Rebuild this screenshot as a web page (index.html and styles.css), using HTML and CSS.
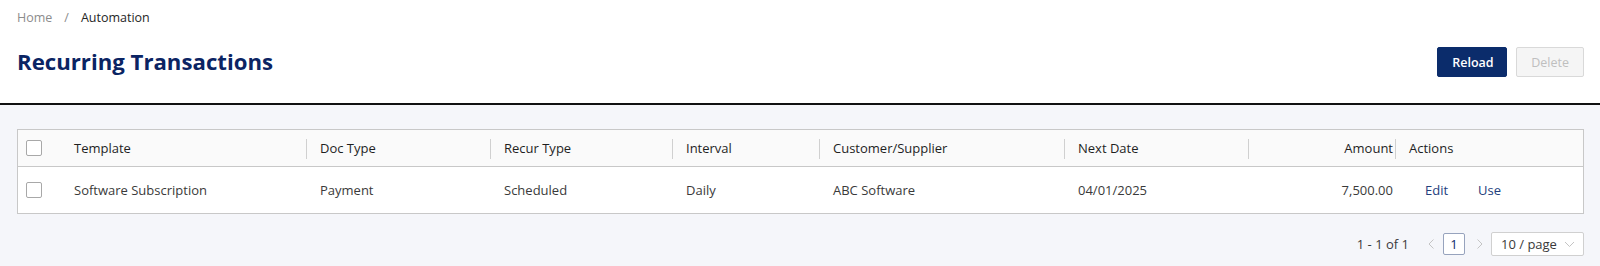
FILE: index.html
```html
<!DOCTYPE html>
<html lang="en">
<head>
  <meta charset="UTF-8">
  <title>Recurring Transactions</title>
  <link rel="stylesheet" href="styles.css">
</head>
<body>
  <div class="page-header">
    <div class="breadcrumb">
      <span class="crumb-link">Home</span>
      <span class="crumb-sep">/</span>
      <span class="crumb-current">Automation</span>
    </div>
    <div class="title-row">
      <h1>Recurring Transactions</h1>
      <div class="header-actions">
        <button class="btn btn-primary">Reload</button>
        <button class="btn" disabled>Delete</button>
      </div>
    </div>
  </div>

  <div class="content">
    <div class="table-wrap">
      <table class="data-table">
        <colgroup>
          <col style="width:43px">
          <col style="width:246px">
          <col style="width:184px">
          <col style="width:182px">
          <col style="width:147px">
          <col style="width:245px">
          <col style="width:184px">
          <col style="width:147px">
          <col>
        </colgroup>
        <thead>
          <tr>
            <th class="cell-check"><span class="checkbox"></span></th>
            <th class="sep">Template</th>
            <th class="sep">Doc Type</th>
            <th class="sep">Recur Type</th>
            <th class="sep">Interval</th>
            <th class="sep">Customer/Supplier</th>
            <th class="sep">Next Date</th>
            <th class="sep num">Amount</th>
            <th>Actions</th>
          </tr>
        </thead>
        <tbody>
          <tr>
            <td class="cell-check"><span class="checkbox"></span></td>
            <td>Software Subscription</td>
            <td>Payment</td>
            <td>Scheduled</td>
            <td>Daily</td>
            <td>ABC Software</td>
            <td>04/01/2025</td>
            <td class="num">7,500.00</td>
            <td class="actions"><a class="link-btn">Edit</a><a class="link-btn">Use</a></td>
          </tr>
        </tbody>
      </table>
    </div>

    <div class="pagination">
      <span class="total">1 - 1 of 1</span>
      <span class="page-arrow">
        <svg width="6" height="10" viewBox="0 0 6 10"><path d="M5.5 0.5 L1 5 L5.5 9.5" fill="none" stroke="#c4c4c4" stroke-width="1"/></svg>
      </span>
      <span class="page-item">1</span>
      <span class="page-arrow">
        <svg width="6" height="10" viewBox="0 0 6 10"><path d="M0.5 0.5 L5 5 L0.5 9.5" fill="none" stroke="#c4c4c4" stroke-width="1"/></svg>
      </span>
      <span class="page-size">10 / page
        <svg width="11" height="7" viewBox="0 0 11 7"><path d="M1 1 L5.5 5.5 L10 1" fill="none" stroke="#c4c4c4" stroke-width="1"/></svg>
      </span>
    </div>
  </div>
</body>
</html>
```

FILE: styles.css
```css
body {
  margin: 0;
  font-family: 'Open Sans', 'Noto Sans', sans-serif;
  font-size: 13px;
  color: #262626;
  background: #f5f6fa;
  height: 266px;
}
.page-header {
  background: #fff;
  padding: 9px 16px 0 17px;
  height: 94px;
  border-bottom: 2px solid #111;
}
.breadcrumb {
  display: flex;
  gap: 12px;
  line-height: 18px;
  font-size: 12.5px;
}
.crumb-link, .crumb-sep {
  color: #8c8c8c;
}
.crumb-current {
  color: #262626;
}
.title-row {
  display: flex;
  justify-content: space-between;
  align-items: center;
  margin-top: 17px;
}
h1 {
  margin: 0;
  font-size: 22.2px;
  font-weight: 700;
  color: #0b2463;
  line-height: 36px;
}
.header-actions {
  display: flex;
  gap: 9px;
}
.btn {
  font-family: inherit;
  font-size: 12.5px;
  height: 30px;
  padding: 0 14px;
  border-radius: 2px;
  border: 1px solid #d9d9d9;
  background: #f5f5f5;
  color: #bfbfbf;
}
.btn-primary {
  background: #0b2c6b;
  border-color: #0b2c6b;
  color: #fff;
  font-weight: 600;
  width: 70px;
}
.content {
  padding: 24px 16px 0 17px;
}
.table-wrap {
  background: #fff;
  border: 1px solid #c8c8c8;
}
.data-table {
  width: 100%;
  border-collapse: collapse;
  table-layout: fixed;
}
.data-table th {
  text-align: left;
  font-weight: 500;
  height: 36px;
  padding: 0 13px;
  border-bottom: 1px solid #c8c8c8;
  background: #fafafa;
  color: #1f1f1f;
  position: relative;
}
.data-table th.sep::after {
  content: '';
  position: absolute;
  right: 0;
  top: 9px;
  height: 20px;
  border-right: 1px solid #d0d0d0;
}
.data-table td {
  height: 46px;
  padding: 0 13px;
  color: #3a3a3a;
}
.data-table .num {
  text-align: right;
  padding-right: 3px;
}
.data-table .cell-check {
  padding: 0 0 0 8px;
}
.checkbox {
  display: block;
  width: 14px;
  height: 14px;
  border: 1px solid #a8a8a8;
  border-radius: 2px;
  background: #fff;
}
.actions {
  white-space: nowrap;
}
.link-btn {
  display: inline-block;
  padding: 0 15px;
  color: #23407d;
}
.actions .link-btn:first-child {
  margin-left: 1px;
}
.pagination {
  display: flex;
  justify-content: flex-end;
  align-items: center;
  margin-top: 18px;
  color: #3a3a3a;
}
.total {
  margin-right: 19px;
}
.page-arrow {
  display: flex;
  align-items: center;
}
.page-item {
  width: 20px;
  height: 20px;
  line-height: 20px;
  text-align: center;
  border: 1px solid #97a3bd;
  border-radius: 2px;
  color: #0b2c6b;
  margin: 0 12px 0 9px;
  background: #fff;
}
.page-size {
  display: flex;
  align-items: center;
  justify-content: space-between;
  white-space: nowrap;
  height: 22px;
  padding: 0 8px 0 9px;
  border: 1px solid #d0d0d0;
  border-radius: 2px;
  background: #fff;
  margin-left: 8px;
  width: 74px;
}
```
